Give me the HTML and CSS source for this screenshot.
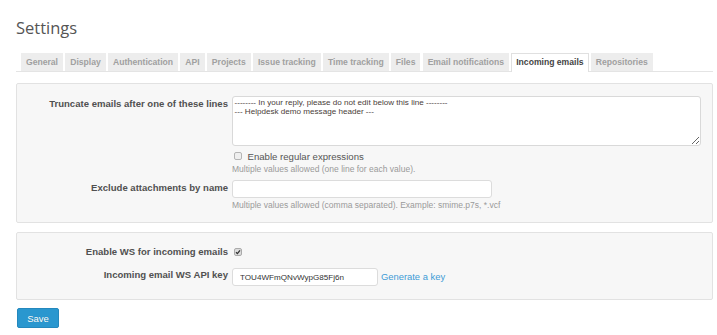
FILE: index.html
```html
<!doctype html>
<html lang="en">
<head>
	<meta charset="UTF-8">
	<title>Settings</title>
	<link rel="stylesheet" href="styles.css">
</head>
<body>
	<div class="content">
		<h2>Settings</h2>
		<ul class="tabs">
			<li>General</li>
			<li>Display</li>
			<li>Authentication</li>
			<li>API</li>
			<li>Projects</li>
			<li>Issue tracking</li>
			<li>Time tracking</li>
			<li>Files</li>
			<li>Email notifications</li>
			<li class="selected">Incoming emails</li>
			<li>Repositories</li>
		</ul>

		<div class="box">
			<div class="field">
				<label class="label">Truncate emails after one of these lines</label>
				<div class="control">
					<textarea class="area">-------- In your reply, please do not edit below this line --------
--- Helpdesk demo message header ---</textarea>
					<div class="check_line"><span class="cb"></span>Enable regular expressions</div>
					<div class="hint">Multiple values allowed (one line for each value).</div>
				</div>
			</div>
			<div class="field gap_top">
				<label class="label">Exclude attachments by name</label>
				<div class="control">
					<input type="text" class="text wide" value="">
					<div class="hint hint_low">Multiple values allowed (comma separated). Example: smime.p7s, *.vcf</div>
				</div>
			</div>
		</div>

		<div class="box box_ws">
			<div class="field">
				<label class="label">Enable WS for incoming emails</label>
				<div class="control check_only">
					<span class="cb checked">
						<svg width="6" height="6" viewBox="0 0 6 6"><path d="M1 3.2 L2.4 4.6 L5 1.4" fill="none" stroke="#333" stroke-width="1.3"/></svg>
					</span>
				</div>
			</div>
			<div class="field key_row">
				<label class="label label_short">Incoming email WS API key</label>
				<div class="control inline">
					<input type="text" class="text short" value="TOU4WFmQNvWypG85Fj6n">
					<a href="#" class="gen">Generate a key</a>
				</div>
			</div>
		</div>

		<button class="save">Save</button>
	</div>
</body>
</html>
```

FILE: styles.css
```css
*{
	margin: 0;
	padding: 0;
	box-sizing: border-box;
}
body{
	background: #fff;
	font-family: "Liberation Sans", Arial, sans-serif;
	color: #555;
}
.content{
	padding: 17px 4px 0 16px;
}
h2{
	font-family: "Open Sans", sans-serif;
	font-weight: normal;
	font-size: 16.5px;
	line-height: 22px;
	color: #555;
}
.tabs{
	list-style-type: none;
	display: flex;
	gap: 2.2px;
	margin-top: 14px;
	padding-left: 5px;
	border-bottom: 1px solid #e4e4e4;
	height: 19px;
}
.tabs li{
	height: 18px;
	padding: 1px 5px 0;
	line-height: 17px;
	font-size: 8.6px;
	font-weight: bold;
	color: #a0a0a0;
	background: #ededed;
}
.tabs li.selected{
	height: 19px;
	padding: 0 4px;
	background: #fff;
	color: #444;
	border: 1px solid #e0e0e0;
	border-bottom: none;
}

.box{
	margin-top: 11px;
	border: 1px solid #e2e2e2;
	border-radius: 2px;
	background: #f7f7f7;
	padding: 12px 11px 11px 0;
}
.box_ws{
	margin-top: 9px;
	padding: 11px 11px 13px 0;
}
.field{
	display: grid;
	grid-template-columns: 211px 1fr;
	column-gap: 4px;
}
.gap_top{
	margin-top: 5px;
}
.key_row{
	margin-top: 9px;
}
.label{
	text-align: right;
	font-weight: bold;
	font-size: 9.55px;
	line-height: 15px;
	color: #505050;
}
.label_short{
	line-height: 13px;
}
.area{
	display: block;
	width: 100%;
	height: 50px;
	border: 1px solid #d9d9d9;
	border-radius: 3px;
	background: #fff;
	padding: 1px 1.5px;
	font-family: "Liberation Sans", Arial, sans-serif;
	font-size: 8.1px;
	line-height: 9px;
	color: #4a4039;
	resize: vertical;
}
.check_line{
	display: flex;
	align-items: center;
	margin-top: 3px;
	height: 14px;
	font-size: 9.6px;
	color: #555;
}
.cb{
	display: inline-flex;
	align-items: center;
	justify-content: center;
	width: 8px;
	height: 8px;
	margin: 0 5.5px 0 2px;
	border: 1px solid #b5b5b5;
	border-radius: 2px;
	background: #efefef;
}
.cb.checked{
	background: #dcdcdc;
	border-color: #aaa;
}
.check_only{
	display: flex;
	align-items: center;
	height: 15px;
}
.hint{
	margin-top: 1px;
	font-size: 8.5px;
	line-height: 11px;
	color: #9a9a9a;
}
.hint_low{
	margin-top: 2px;
}
.text{
	display: block;
	height: 18px;
	border: 1px solid #dcdcdc;
	border-radius: 3px;
	background: #fff;
	font-family: "Liberation Sans", Arial, sans-serif;
	font-size: 8.1px;
	color: #333;
	padding: 0 7px;
}
.wide{
	width: 260px;
}
.short{
	width: 146px;
}
.inline{
	display: flex;
	align-items: center;
}
.gen{
	margin-left: 3px;
	font-size: 9.4px;
	color: #3d9bd6;
	text-decoration: none;
	position: relative;
	top: -1px;
}
.save{
	display: block;
	margin: 8px 0 0 1px;
	width: 42px;
	height: 20px;
	border: 1px solid #2488bd;
	border-radius: 2px;
	background: #2a97cf;
	color: #fff;
	font-family: "Liberation Sans", Arial, sans-serif;
	font-size: 9.5px;
	text-shadow: 0 0 1px rgba(0,0,0,0.2);
}
```
